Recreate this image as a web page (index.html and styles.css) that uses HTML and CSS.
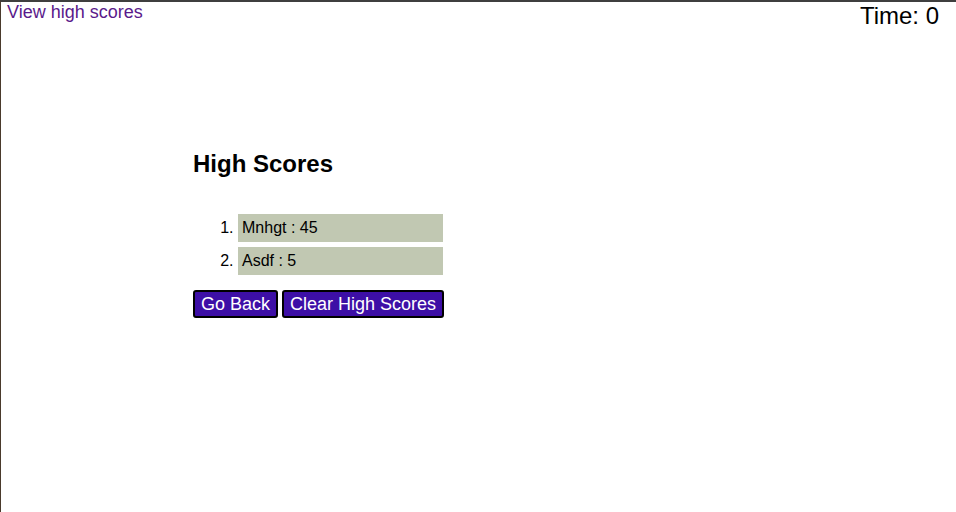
FILE: index.html
```html
<!DOCTYPE html>
<html>
<head>
<meta charset="utf-8">
<link rel="stylesheet" href="styles.css">
</head>
<body>
<header class="topbar">
  <a class="view-link" href="#">View high scores</a>
  <div class="timer">Time: 0</div>
</header>
<main class="scores">
  <h2 class="scores-title">High Scores</h2>
  <ol class="score-list">
    <li class="score-item"><span class="score-box">Mnhgt : 45</span></li>
    <li class="score-item"><span class="score-box">Asdf : 5</span></li>
  </ol>
  <div class="actions">
    <button class="btn">Go Back</button>
    <button class="btn">Clear High Scores</button>
  </div>
</main>
</body>
</html>
```
FILE: styles.css
```css
html {
  height: 100%;
  box-sizing: border-box;
  border-top: 2px solid #3f3f3f;
  border-left: 1px solid #4a3a2c;
}
body {
  margin: 0;
  font-family: "Liberation Sans", Arial, sans-serif;
  background: #fff;
  color: #000;
}
.topbar {
  display: flex;
  justify-content: space-between;
  align-items: flex-start;
  padding: 0 17px 0 6px;
}
.view-link {
  font-size: 18px;
  line-height: 21px;
  color: #5a1a8b;
  text-decoration: none;
}
.timer {
  font-size: 24px;
  line-height: 27px;
}
.scores {
  padding-left: 192px;
  padding-top: 121px;
}
.scores-title {
  font-size: 24px;
  margin: 0;
  line-height: 28px;
}
.score-list {
  margin: 36px 0 0 0;
  padding-left: 45px;
  font-size: 16px;
}
.score-item {
  margin-bottom: 5px;
}
.score-item::marker {
  color: #000;
}
.score-box {
  display: block;
  width: 201px;
  height: 28px;
  line-height: 28px;
  padding-left: 4px;
  background: #c1c8b2;
}
.actions {
  display: flex;
  gap: 4px;
  margin-top: 15px;
}
.btn {
  font-family: "Liberation Sans", Arial, sans-serif;
  font-size: 18px;
  line-height: 21px;
  color: #fff;
  background: #3d0fa6;
  border: 2px solid #000;
  border-radius: 3px;
  padding: 1px 6px;
  height: 28px;
}
```
